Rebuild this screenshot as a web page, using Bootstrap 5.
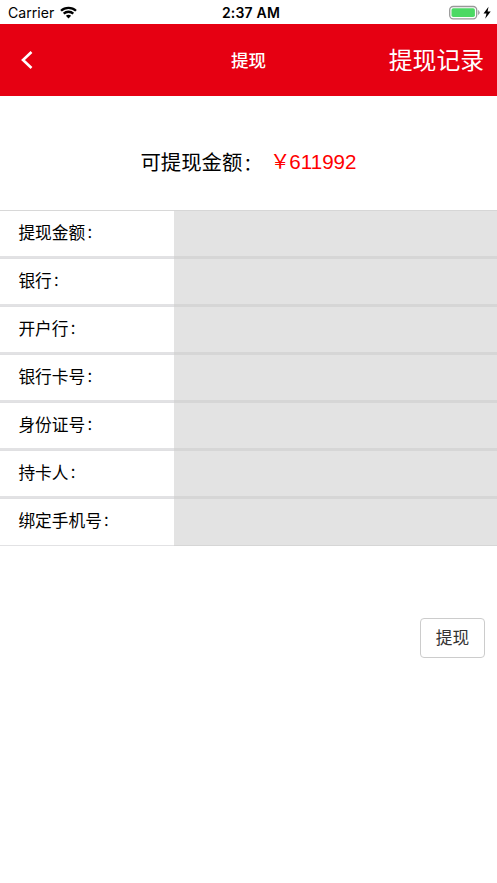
<!DOCTYPE html>
<html lang="zh-CN">
<head>
<meta charset="utf-8">
<meta name="viewport" content="width=device-width, initial-scale=1">
<title>提现</title>
<link href="https://cdn.jsdelivr.net/npm/bootstrap@5.3.0/dist/css/bootstrap.min.css" rel="stylesheet">
<style>
body{font-family:"Liberation Sans","Noto Sans CJK SC",sans-serif;color:#000;background:#fff;overflow:hidden}
.status-bar{height:24px;padding:1px 6px 0 8px;font:14.1px/26px Inter,sans-serif}
.status-time{font-weight:600;font-size:14px;letter-spacing:.2px;padding-left:3px}
.wifi{margin-left:6px}
.side{flex:1 1 0}
.top-bar{height:72px;background:#e60012;color:#fff;padding:1px 13px 0 20px}
.back{margin-top:-2px}
.top-title{font-size:17.5px;font-weight:500;line-height:24px}
.side-start{margin-right:-7px}
.top-link{font-size:23.8px;line-height:30px;padding-top:1px}
.balance{height:114px;font-size:20.4px;line-height:30px;padding-top:52px}
.balance-value{color:#f00;margin:-1px 0 0 7px}
.digits{font-size:20.6px;margin-left:-1px}
.form-row{height:48px;border-top:1px solid #e0e0e2;border-bottom:2px solid #e2e2e4}
.form-row:first-child{border-top-color:#d8d8d8}
.form-row:last-child{border-bottom-width:1px}
.row-label{width:174px;padding:0 0 0 18.4px;font-size:16.7px;line-height:24px}
.form-row:not(:last-child) .row-label{padding-top:1px}
.row-field{background:#e3e3e3;border:solid #d6d6d6;border-width:1px 0 2px;margin:-1px 0 -2px}
.form-row:last-child .row-field{border-bottom-width:1px;margin-bottom:-1px}
.colon{font-size:.86em;margin-left:1px;padding-bottom:2px}
.balance .colon{margin-right:2px}
.submit{width:65px;height:40px;margin:72px 12px 0 0;padding:1px 0 0;border:1px solid #ccc;border-radius:4px;background:#fff;color:#333;font-size:16.7px}
</style>
</head>
<body>
<div class="status-bar d-flex align-items-center">
  <div class="side d-flex align-items-center"><span>Carrier</span>
    <svg class="wifi" width="17" height="13" viewBox="0 0 17 13" fill="none" stroke="#000" stroke-width="2.3"><path d="M1 4.8C5.1.8 11.900.8 16 4.800M3.700 7.600c2.700-2.500 6.900-2.500 9.600 0"/><path d="M8.500 12.500 5.900 9.800c1.500-1.300 3.700-1.300 5.200 0z" fill="#000" stroke="none"/></svg>
  </div>
  <span class="status-time">2:37 AM</span>
  <div class="side d-flex justify-content-end align-items-center">
    <svg width="42" height="16" viewBox="0 0 42 16"><rect x=".7" y="1.500" width="27" height="12.300" rx="3.500" fill="#fff" stroke="#999" stroke-width="1.300"/><rect x="2.500" y="3.300" width="23.400" height="8.700" rx="1.800" fill="#4cd964"/><path d="M29.500 5.500q1.800 2 0 4z" fill="#999" stroke="#999" stroke-width=".6"/><path d="M39.500 1.800 34.500 8.500h3l-1.300 5.200L41.700 6.500h-3.100z"/></svg>
  </div>
</div>
<header class="top-bar d-flex align-items-center">
  <div class="side side-start"><svg class="back d-block" width="14" height="20" viewBox="0 0 14 20" fill="none" stroke="#fff" stroke-width="2.600"><path d="M11.500 2 3 10l8.500 8"/></svg></div>
  <span class="top-title">提现</span>
  <div class="side text-end text-nowrap top-link">提现记录</div>
</header>
<main>
  <div class="balance d-flex justify-content-center"><span>可提现金额<span class="colon">：</span></span><span class="balance-value">￥<span class="digits">611992</span></span></div>
  <div>
    <div class="form-row d-flex"><div class="row-label d-flex align-items-center">提现金额<span class="colon">：</span></div><div class="row-field flex-fill"></div></div>
    <div class="form-row d-flex"><div class="row-label d-flex align-items-center">银行<span class="colon">：</span></div><div class="row-field flex-fill"></div></div>
    <div class="form-row d-flex"><div class="row-label d-flex align-items-center">开户行<span class="colon">：</span></div><div class="row-field flex-fill"></div></div>
    <div class="form-row d-flex"><div class="row-label d-flex align-items-center">银行卡号<span class="colon">：</span></div><div class="row-field flex-fill"></div></div>
    <div class="form-row d-flex"><div class="row-label d-flex align-items-center">身份证号<span class="colon">：</span></div><div class="row-field flex-fill"></div></div>
    <div class="form-row d-flex"><div class="row-label d-flex align-items-center">持卡人<span class="colon">：</span></div><div class="row-field flex-fill"></div></div>
    <div class="form-row d-flex"><div class="row-label d-flex align-items-center">绑定手机号<span class="colon">：</span></div><div class="row-field flex-fill"></div></div>
  </div>
  <div class="d-flex justify-content-end"><button class="btn submit" type="button">提现</button></div>
</main>
<script src="https://cdn.jsdelivr.net/npm/bootstrap@5.3.0/dist/js/bootstrap.bundle.min.js"></script>
</body>
</html>
